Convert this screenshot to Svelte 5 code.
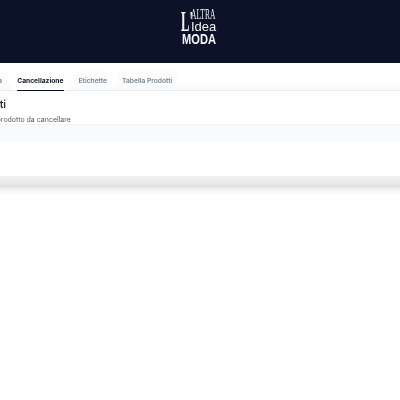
<script>
  const tabs = [
    { label: 'Stampa', active: false },
    { label: 'Cancellazione', active: true },
    { label: 'Etichette', active: false },
    { label: 'Tabella Prodotti', active: false }
  ];
</script>

<header class="topbar">
  <div class="logo">
    <span class="apostrophe">L'</span>
    <div class="words">
      <span class="altra">ALTRA</span>
      <span class="idea">Idea</span>
    </div>
    <span class="moda">MODA</span>
  </div>
</header>

<div class="shell">
  <main class="card">
    <nav class="tabs">
      {#each tabs as tab}
        <div class="tab" class:active={tab.active}><span>{tab.label}</span></div>
      {/each}
    </nav>
    <section class="body">
      <h2>Prodotti</h2>
      <p>Scegli il prodotto da cancellare</p>
    </section>
    <div class="band"></div>
  </main>
</div>
<div class="fade"></div>

<style>
  :global(body) {
    margin: 0;
    background: #fff;
    overflow: hidden;
    font-family: Inter, "Noto Sans", sans-serif;
    -webkit-font-smoothing: antialiased;
  }

  .topbar {
    height: 63px;
    background: #0c1328;
    display: flex;
    justify-content: center;
    will-change: transform;
  }

  .logo {
    width: 36px;
    height: 37px;
    margin-top: 8px;
    margin-left: -2px;
    display: grid;
    grid-template-columns: 10px 1fr;
    grid-template-rows: 25px 12px;
    color: #f4f4f4;
  }

  .apostrophe {
    font-family: "Liberation Serif", serif;
    font-weight: 700;
    font-size: 30px;
    line-height: 26px;
    transform: scaleX(0.42);
    transform-origin: left center;
    white-space: nowrap;
  }

  .words {
    display: flex;
    flex-direction: column;
    line-height: 1;
  }

  .altra {
    font-family: "Liberation Serif", serif;
    font-size: 15px;
    height: 13px;
    line-height: 13px;
    transform: scaleX(0.5);
    transform-origin: left center;
  }

  .idea {
    font-family: "Liberation Sans", sans-serif;
    font-size: 13px;
    height: 12px;
    line-height: 12px;
  }

  .moda {
    grid-column: 1 / 3;
    font-family: "Liberation Sans", sans-serif;
    font-weight: 700;
    font-size: 15px;
    line-height: 12px;
    transform: scaleX(0.74);
    transform-origin: left center;
    margin-left: 1px;
  }

  .shell {
    height: 122px;
    background: linear-gradient(#f2f2f2 113px, #e6e6e6 122px);
  }

  .card {
    height: 113px;
    background: #fff;
    overflow: hidden;
    will-change: transform;
  }

  .fade {
    height: 10px;
    background: linear-gradient(#dcdcdc, #f0f0f0 40%, #fff);
  }

  .tabs {
    display: flex;
    height: 28px;
    box-sizing: border-box;
    padding-top: 8px;
    margin-left: -28.5px;
    border-bottom: 1px solid #e9ebee;
    background: linear-gradient(#fff 70%, #f9f9f9);
    gap: 3px;
  }

  .tab {
    padding: 0 5px;
    margin: 0 1px;
    font-size: 6.7px;
    font-weight: 600;
    color: #7b8490;
    line-height: 20px;
    background: #fafbfc;
    border-radius: 3px 3px 0 0;
    white-space: nowrap;
  }

  .tab span {
    display: block;
    height: 20px;
    box-sizing: border-box;
  }

  .tab.active {
    background: #fff;
    color: #12151c;
    font-weight: 700;
  }

  .tab.active span {
    border-bottom: 1.5px solid #0c1328;
  }

  .body {
    height: 33px;
    margin-left: -35px;
    box-sizing: border-box;
    padding-top: 6px;
  }

  h2 {
    margin: 0;
    font-size: 11px;
    font-weight: 500;
    line-height: 14px;
    color: #1f2329;
  }

  p {
    margin: 4px 0 0 4px;
    font-size: 7px;
    line-height: 9px;
    color: #555b63;
  }

  .band {
    height: 18px;
    box-sizing: border-box;
    background: #f9fafc;
    border-top: 1px solid #f2f3f4;
  }
</style>
